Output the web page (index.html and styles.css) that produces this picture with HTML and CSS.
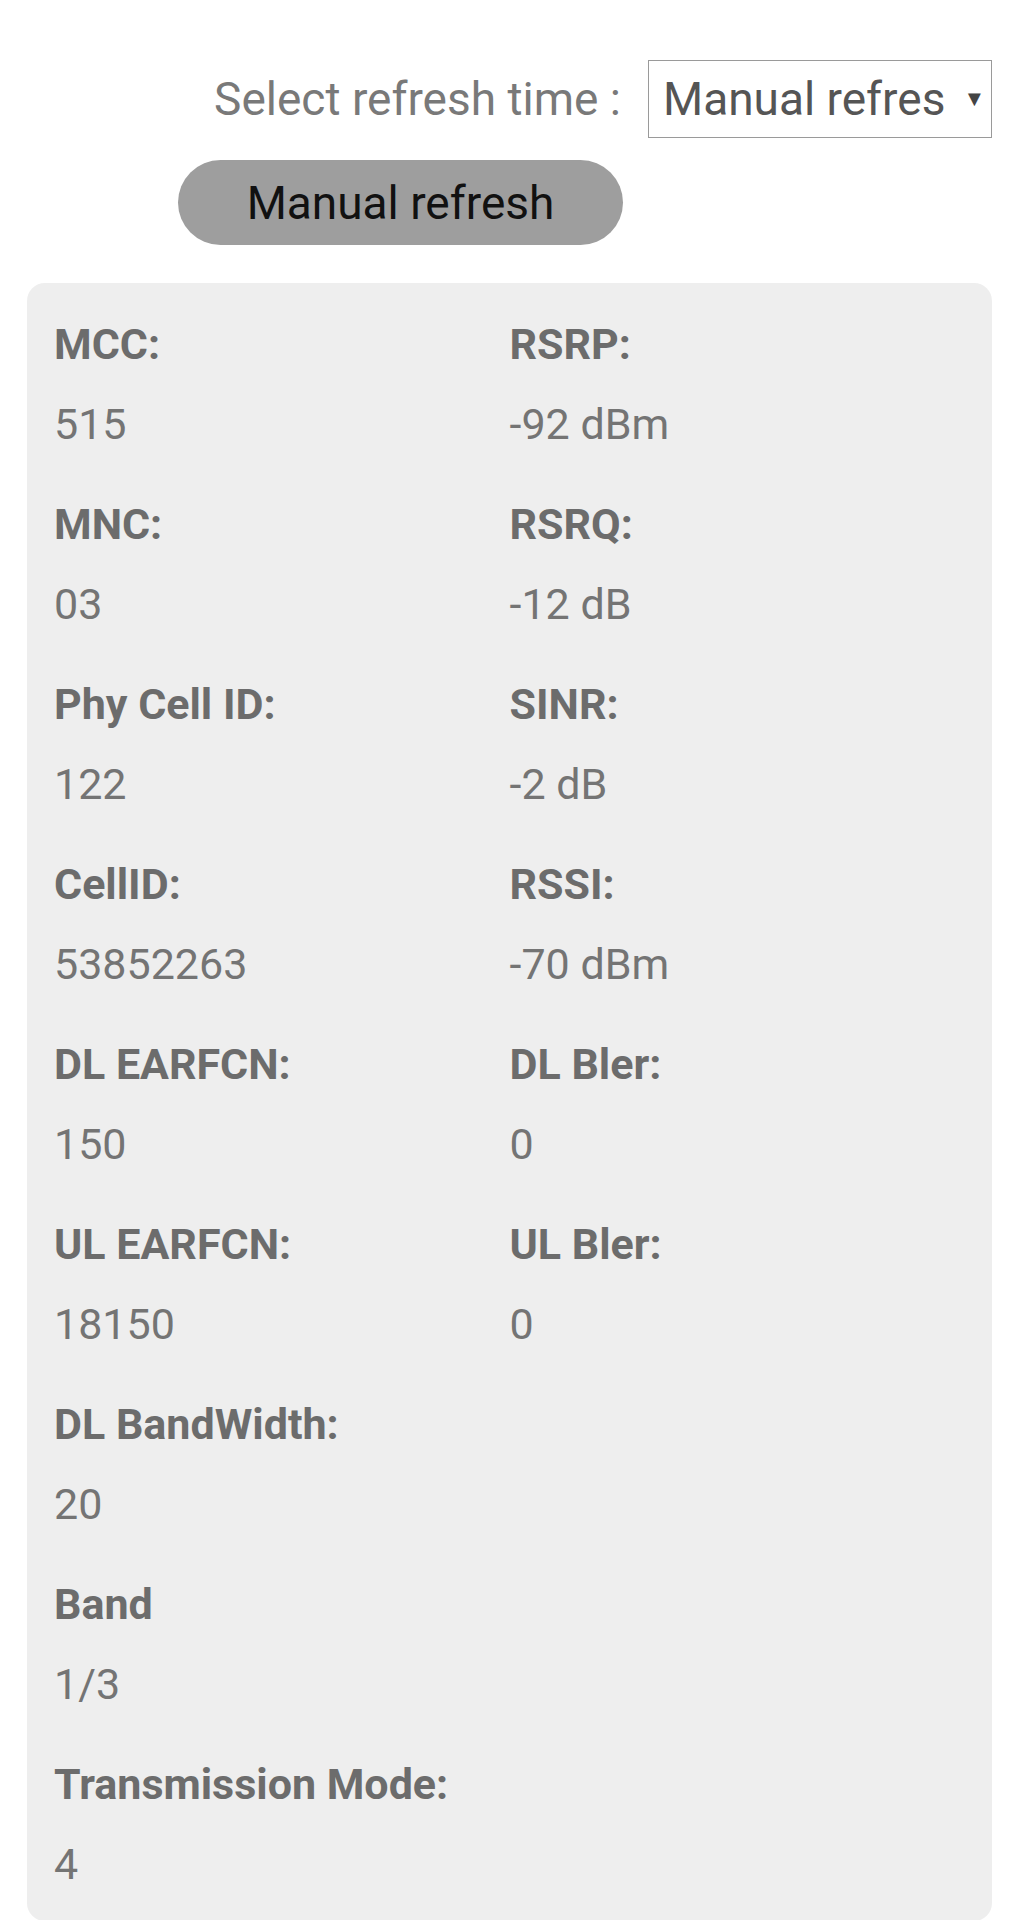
FILE: index.html
```html
<!DOCTYPE html>
<html lang="en">
<head>
  <meta charset="UTF-8">
  <title>LTE status</title>
  <link rel="stylesheet" href="styles.css">
</head>
<body>

  <!-- refresh controls -->
  <div class="toolbar">
    <label class="refresh-label">Select refresh time :</label>
    <div class="select">
      <span class="select-text">Manual refres</span>
      <span class="select-arrow">&#9660;</span>
    </div>
    <button class="refresh-button">Manual refresh</button>
  </div>

  <!-- cell info -->
  <div class="info-box">
    <div class="item"><p class="name">MCC:</p><p class="value">515</p></div>
    <div class="item"><p class="name">RSRP:</p><p class="value">-92 dBm</p></div>

    <div class="item"><p class="name">MNC:</p><p class="value">03</p></div>
    <div class="item"><p class="name">RSRQ:</p><p class="value">-12 dB</p></div>

    <div class="item"><p class="name">Phy Cell ID:</p><p class="value">122</p></div>
    <div class="item"><p class="name">SINR:</p><p class="value">-2 dB</p></div>

    <div class="item"><p class="name">CellID:</p><p class="value">53852263</p></div>
    <div class="item"><p class="name">RSSI:</p><p class="value">-70 dBm</p></div>

    <div class="item"><p class="name">DL EARFCN:</p><p class="value">150</p></div>
    <div class="item"><p class="name">DL Bler:</p><p class="value">0</p></div>

    <div class="item"><p class="name">UL EARFCN:</p><p class="value">18150</p></div>
    <div class="item"><p class="name">UL Bler:</p><p class="value">0</p></div>

    <div class="item full"><p class="name">DL BandWidth:</p><p class="value">20</p></div>
    <div class="item full"><p class="name">Band</p><p class="value">1/3</p></div>
    <div class="item full"><p class="name">Transmission Mode:</p><p class="value">4</p></div>
  </div>

</body>
</html>
```

FILE: styles.css
```css
* {
  margin: 0;
  padding: 0;
  box-sizing: border-box;
}
html, body {
  background: #fff;
  font-family: Roboto, 'Liberation Sans', sans-serif;
}
body {
  padding: 60px 27px 0;
}

.toolbar {
  display: grid;
  grid-template-columns: 1fr auto;
  column-gap: 27px;
  row-gap: 22px;
  align-items: center;
}

.refresh-label {
  justify-self: end;
  font-size: 46px;
  color: #797979;
}

.select {
  width: 344px;
  height: 78px;
  border: 1px solid #9a9a9a;
  display: flex;
  align-items: center;
  padding-left: 14px;
  color: #555;
}
.select-text {
  font-size: 46px;
  line-height: 60px;
  white-space: nowrap;
}
.select-arrow {
  font-size: 22px;
  margin-left: 18px;
  color: #444;
}

.refresh-button {
  justify-self: end;
  margin-right: -2px;
  width: 445px;
  height: 85px;
  border: none;
  border-radius: 43px;
  background: #9e9e9e;
  color: #111;
  font-family: Roboto, 'Liberation Sans', sans-serif;
  font-size: 46px;
}

.info-box {
  margin-top: 38px;
  background: #eeeeee;
  border-radius: 18px;
  padding: 21px 27px 17px;
  display: grid;
  grid-template-columns: 1fr 1fr;
  row-gap: 20px;
}

.item.full {
  grid-column: 1 / span 2;
}

.name, .value {
  font-size: 43px;
  line-height: 80px;
  white-space: nowrap;
}
.name {
  font-weight: bold;
  color: #6c6c6c;
}
.value {
  color: #747474;
}
```
